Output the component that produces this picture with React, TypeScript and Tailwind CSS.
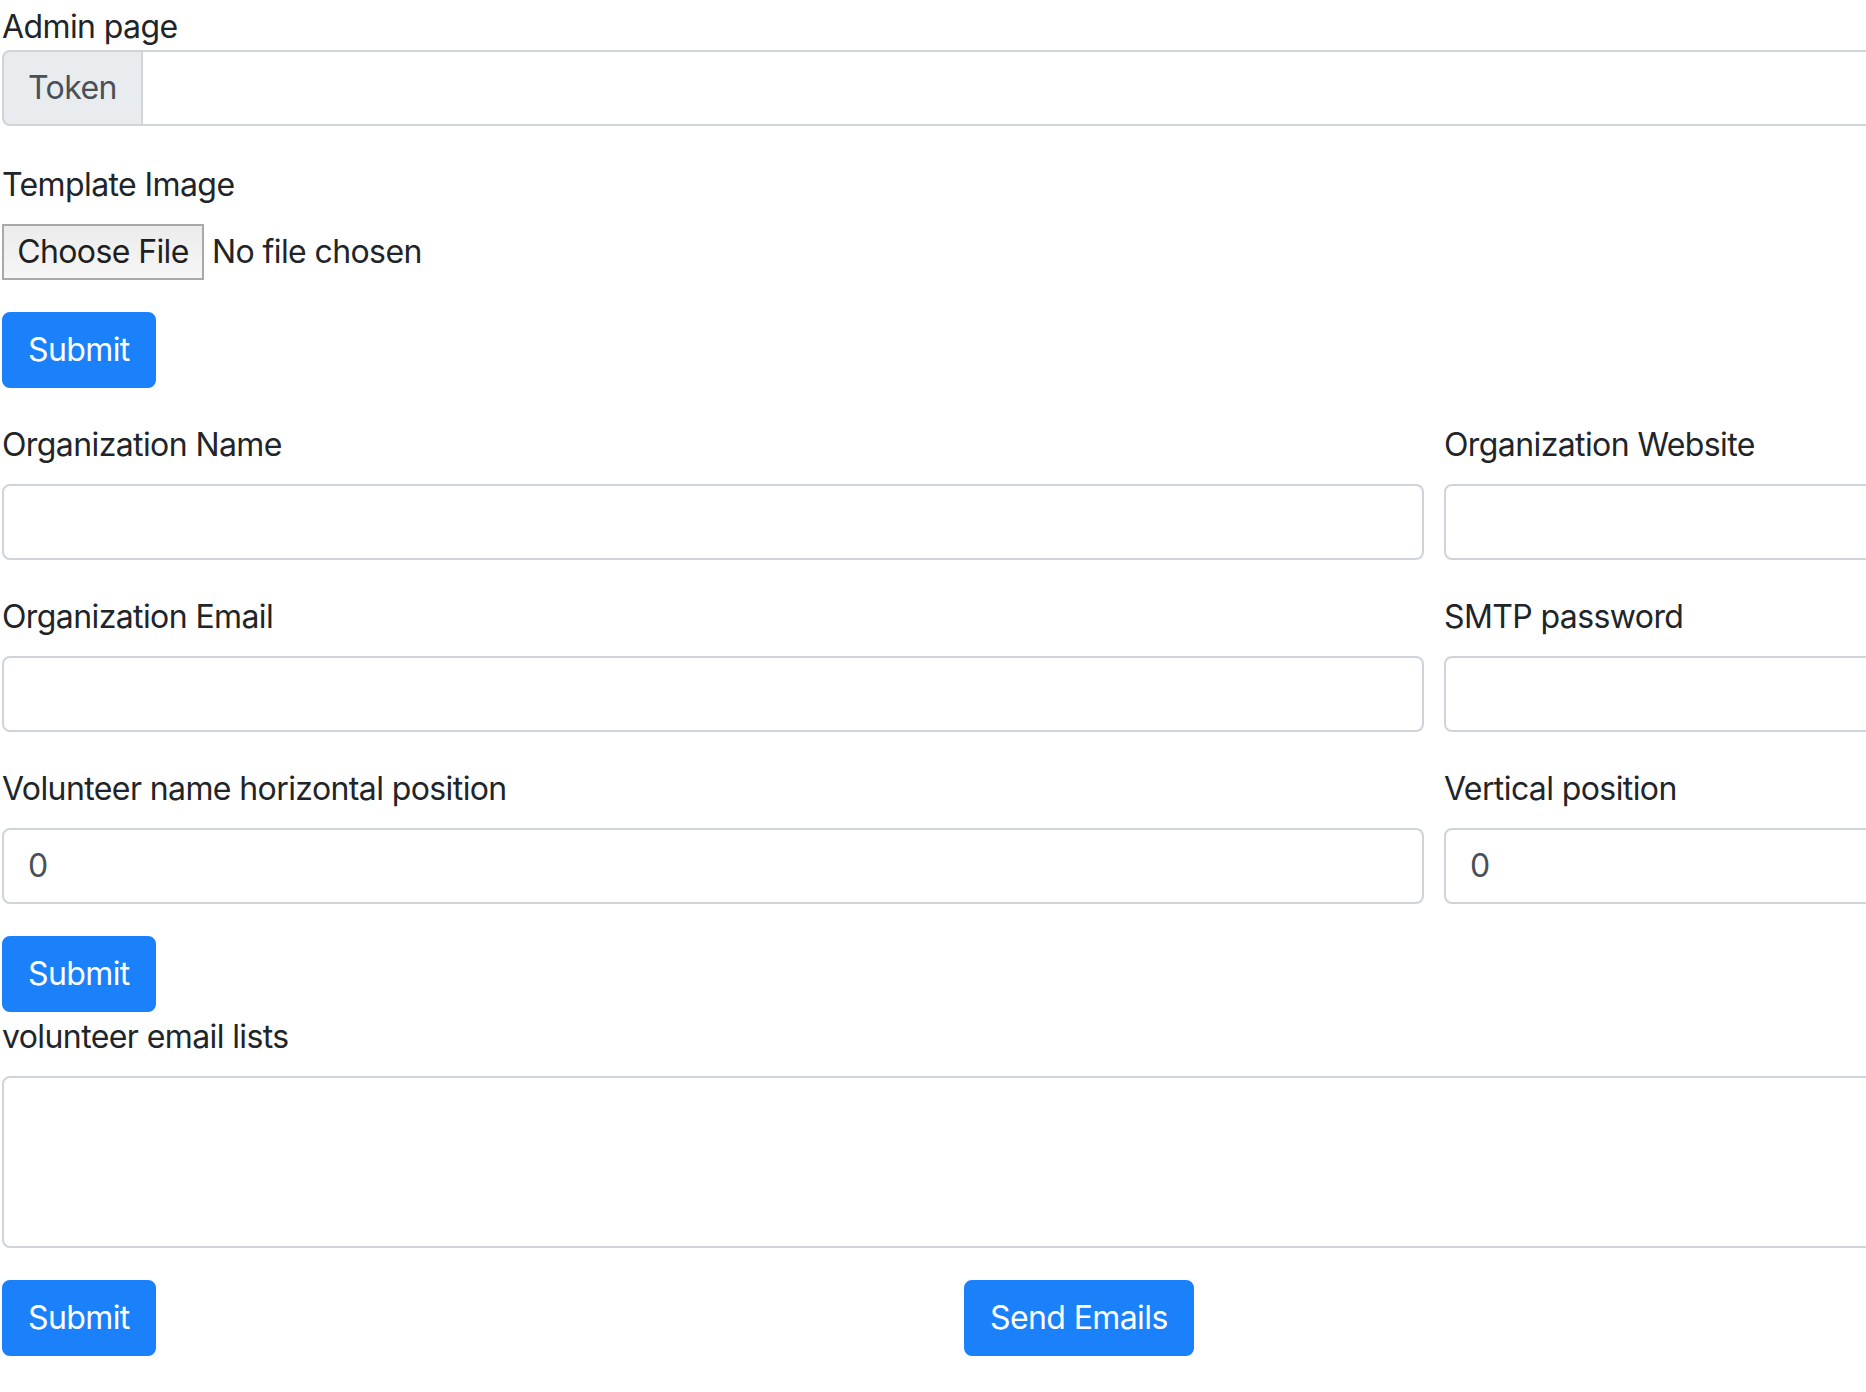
import React from "react";

const FONT = { fontFamily: "Inter, 'Noto Sans', 'Liberation Sans', sans-serif" };

function Field({ label, value }: { label: string; value?: string }) {
  return (
    <div className="flex flex-col mb-[32px]">
      <label className="h-[48px] leading-[48px] mb-[16px] pt-[1px]">{label}</label>
      <div className="h-[76px] border-2 border-[#ced4da] rounded-[8px] bg-white flex items-center pl-[24px] text-[#495057]">
        {value ?? ""}
      </div>
    </div>
  );
}

function Btn({ children }: { children: React.ReactNode }) {
  return (
    <button className="h-[76px] px-[24px] rounded-[8px] bg-[#1a81fb] text-white text-[32px] leading-[48px] border-2 border-[#1a81fb]">
      {children}
    </button>
  );
}

export default function App() {
  return (
    <div
      className="w-[1866px] min-h-screen overflow-hidden bg-white text-[#212529] text-[32px] leading-[48px] tracking-[-0.6px] pl-[2px] pt-[3px]"
      style={FONT}
    >
      <div className="w-[2866px] flex flex-col items-start">
        <div className="h-[47px]">Admin page</div>
        <div className="w-full h-[76px] flex">
          <span className="h-full flex items-center px-[24px] bg-[#e9ecef] text-[#495057] border-2 border-[#ced4da] rounded-l-[8px]">
            Token
          </span>
          <div className="flex-1 h-full border-2 border-l-0 border-[#ced4da] rounded-r-[8px] bg-white" />
        </div>

        <label className="mt-[34px] h-[48px] mb-[16px] pt-[1px]">Template Image</label>
        <div className="h-[56px] flex items-center">
          <span className="h-[56px] w-[202px] flex items-center justify-center border-2 border-[#a9a9a9] bg-gradient-to-b from-[#ececec] to-[#f6f6f6] text-[#1f1f1f]">
            Choose File
          </span>
          <span className="ml-[8px]">No file chosen</span>
        </div>

        <div className="mt-[32px]">
          <Btn>Submit</Btn>
        </div>

        <div className="mt-[32px] w-full grid grid-cols-[1422px_1422px] gap-x-[20px]">
          <Field label="Organization Name" />
          <Field label="Organization Website" />
          <Field label="Organization Email" />
          <Field label="SMTP password" />
          <Field label="Volunteer name horizontal position" value="0" />
          <Field label="Vertical position" value="0" />
        </div>

        <div>
          <Btn>Submit</Btn>
        </div>
        <label className="h-[48px] mb-[16px] pt-[1px]">volunteer email lists</label>
        <div className="w-full h-[172px] border-2 border-[#ced4da] rounded-[8px] bg-white" />

        <div className="mt-[32px] flex w-full">
          <div className="w-[962px]">
            <Btn>Submit</Btn>
          </div>
          <div>
            <Btn>Send Emails</Btn>
          </div>
        </div>
      </div>
    </div>
  );
}
